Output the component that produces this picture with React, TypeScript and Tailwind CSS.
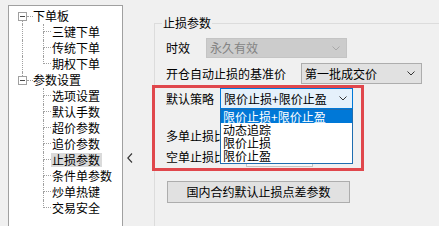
import React from 'react';

type TreeGroup = { label: string; children: string[] };

const tree: TreeGroup[] = [
  { label: '下单板', children: ['三键下单', '传统下单', '期权下单'] },
  {
    label: '参数设置',
    children: ['选项设置', '默认手数', '超价参数', '追价参数', '止损参数', '条件单参数', '炒单热键', '交易安全'],
  },
];

const selectedNode = '止损参数';
const strategies = ['限价止损+限价止盈', '动态追踪', '限价止损', '限价止盈'];

const dotted = 'border-dotted border-[#a0a0a0]';

const ArrowDown = ({ color = '#333' }: { color?: string }) => (
  <svg width="8" height="5" viewBox="0 0 8 5" className="shrink-0">
    <path d="M0.5 0.5 L4 4 L7.5 0.5" fill="none" stroke={color} strokeWidth="1" />
  </svg>
);

const RootRow = ({ label, first, last }: { label: string; first: boolean; last: boolean }) => (
  <div className="flex h-4 items-center">
    <div className="w-[9px] shrink-0" />
    <div className="flex w-[9px] shrink-0 flex-col self-stretch">
      <div className={`ml-[4px] h-[4px] ${first ? '' : 'border-l ' + dotted}`} />
      <div className="flex h-[9px] items-center justify-center border border-[#a0a0a0] bg-white">
        <div className="h-px w-[5px] bg-[#4a4a4a]" />
      </div>
      <div className={`ml-[4px] flex-1 ${last ? '' : 'border-l ' + dotted}`} />
    </div>
    <div className={`w-[6px] border-t ${dotted}`} />
    <span className="leading-[14px]">{label}</span>
  </div>
);

const ChildRow = ({ label, rootLine, last }: { label: string; rootLine: boolean; last: boolean }) => (
  <div className="flex h-4">
    <div className="w-[13px] shrink-0" />
    <div className={`w-[21px] shrink-0 ${rootLine ? 'border-l ' + dotted : ''}`} />
    <div className="flex w-[8px] shrink-0 flex-col">
      <div className={`h-[8px] border-b border-l ${dotted}`} />
      <div className={`flex-1 ${last ? '' : 'border-l ' + dotted}`} />
    </div>
    <div className="flex items-center">
      <span
        className={`pl-px pr-[2px] leading-[14px] ${label === selectedNode ? 'bg-[#dadada]' : ''}`}
      >
        {label}
      </span>
    </div>
  </div>
);

export default function App() {
  return (
    <div className="relative flex h-[226px] w-[439px] overflow-hidden bg-[#f0f0f0] font-['Noto_Sans_CJK_SC',sans-serif] text-[12px] text-black">
      {/* settings tree */}
      <div className="shrink-0 pl-[8px] pt-[5px]">
        <div className="h-[240px] w-[115px] border border-[#a0a0a0] bg-white pt-[2px]">
          {tree.map((group, gi) => (
            <div key={group.label}>
              <RootRow label={group.label} first={gi === 0} last={gi === tree.length - 1} />
              {group.children.map((child, ci) => (
                <ChildRow
                  key={child}
                  label={child}
                  rootLine={gi < tree.length - 1}
                  last={ci === group.children.length - 1}
                />
              ))}
            </div>
          ))}
        </div>
      </div>

      {/* collapse handle */}
      <div className="w-[31px] shrink-0 pl-[4px] pt-[153px]">
        <svg width="6" height="10" viewBox="0 0 6 10">
          <path d="M5 0.5 L0.8 5 L5 9.5" fill="none" stroke="#333" strokeWidth="1.1" />
        </svg>
      </div>

      {/* stop-loss group */}
      <fieldset className="mt-[16px] min-w-0 flex-1 border-l border-t border-[#dcdcdc] pl-[11px]">
        <legend className="-ml-[4px] px-px leading-[14px]">止损参数</legend>

        <div className="mt-[8px] flex h-[20px] items-center">
          <span className="w-[40px] shrink-0 leading-[14px]">时效</span>
          <div className="flex h-[20px] w-[141px] items-center justify-between border border-[#c4c4c4] bg-[#cccccc] pl-[3px] pr-[6px] text-[#838383]">
            <span className="leading-[14px]">永久有效</span>
            <ArrowDown color="#a8a8a8" />
          </div>
        </div>

        <div className="mt-[5px] flex h-[21px] items-center">
          <span className="w-[135px] shrink-0 leading-[14px]">开仓自动止损的基准价</span>
          <div className="flex h-[21px] w-[121px] items-center justify-between border border-[#adadad] bg-[#e1e1e1] pl-[3px] pr-[6px]">
            <span className="leading-[14px]">第一批成交价</span>
            <ArrowDown />
          </div>
        </div>

        <div className="mt-[4px] flex h-[21px] items-center">
          <span className="w-[54px] shrink-0 leading-[14px]">默认策略</span>
          <div className="flex h-[21px] w-[133px] items-center justify-between border border-[#0078d7] bg-[#e5f1fb] pl-[3px] pr-[5px]">
            <span className="leading-[14px]">限价止损+限价止盈</span>
            <ArrowDown />
          </div>
        </div>

        <div className="mt-[16px] flex h-[21px] items-center">
          <span className="w-[80px] shrink-0 leading-[14px]">多单止损比例</span>
          <div className="flex h-[20px] w-[67px] items-center border border-[#c4c4c4] bg-[#f7f7f7] pl-[3px] text-[#a0a0a0]">
            <span className="leading-[14px]">数额比例</span>
          </div>
        </div>

        <div className="flex h-[21px] items-center">
          <span className="w-[80px] shrink-0 leading-[14px]">空单止损比例</span>
          <div className="flex h-[20px] w-[67px] items-center border border-[#c4c4c4] bg-[#f7f7f7] pl-[3px] text-[#a0a0a0]">
            <span className="leading-[14px]">数额比例</span>
          </div>
        </div>

        <button className="ml-px mt-[14px] flex h-[22px] w-[183px] items-center justify-center border border-[#adadad] bg-[#e1e1e1] leading-[14px]">
          国内合约默认止损点差参数
        </button>
      </fieldset>

      {/* open dropdown list */}
      <div className="absolute left-[220px] top-[109px] h-[55px] w-[133px] border border-[#1e6db0] bg-white">
        {strategies.map((s, i) => (
          <div
            key={s}
            className={`h-[13px] pl-[2px] leading-[13px] ${i === 0 ? 'bg-[#0078d7] text-white' : ''}`}
          >
            {s}
          </div>
        ))}
      </div>

      {/* highlight annotation */}
      <div className="pointer-events-none absolute left-[152px] top-[85px] h-[86px] w-[212px] border-[3px] border-[#e0474c]" />
    </div>
  );
}
